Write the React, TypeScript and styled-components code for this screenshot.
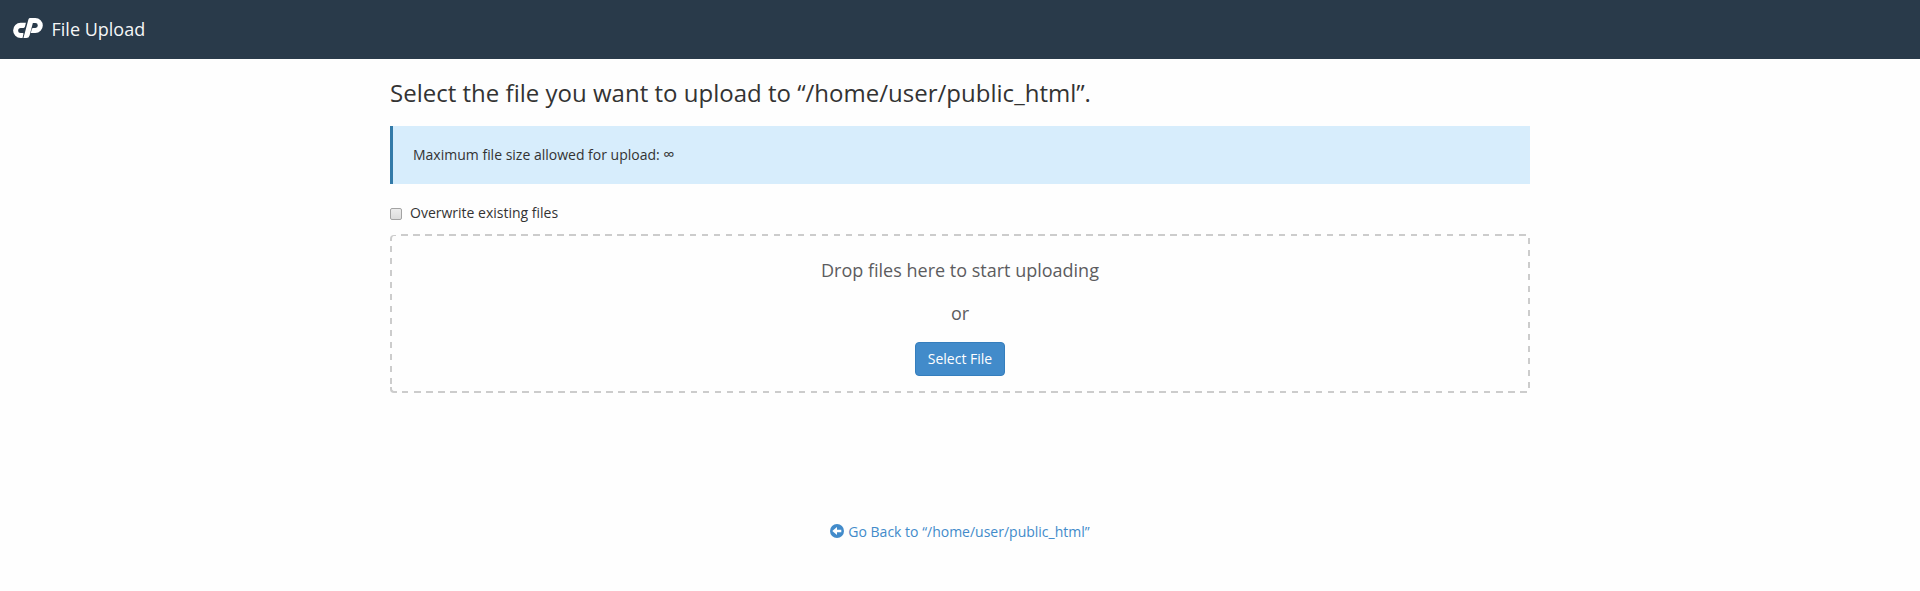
import React from "react";
import styled, { createGlobalStyle } from "styled-components";

const GlobalStyle = createGlobalStyle`
  * { box-sizing: border-box; }
  body {
    margin: 0;
    min-height: 100vh;
    background: #fefefe;
    color: #333;
    font: 14px/20px "Open Sans", sans-serif;
  }
`;

const Header = styled.header`
  display: flex;
  align-items: center;
  gap: 8.500px;
  height: 59px;
  padding: 0 0 1px 13px;
  background: #293a4a;
  color: #f5f6f7;
  font-size: 18px;
`;

const Logo = styled.svg`
  width: 30px;
  height: 20px;
  margin-bottom: 2px;
  fill: #fff;
`;

const Main = styled.main`
  width: 1140px;
  margin: 0 auto;
`;

const Title = styled.h1`
  margin: 20px 0;
  font-size: 24px;
  font-weight: 400;
  line-height: 27px;
  letter-spacing: 0.01px;
`;

const Notice = styled.div`
  height: 58px;
  padding: 19px 20px;
  background: #d7edfc;
  border-left: 3px solid #337aa8;
`;

const Infinity = styled.span`
  font-size: 16px;
  line-height: 0;
`;

const CheckLabel = styled.label`
  display: flex;
  align-items: center;
  gap: 8px;
  height: 20px;
  margin: 19px 0 11px;
`;

const Checkbox = styled.input`
  appearance: none;
  width: 12px;
  height: 12px;
  margin: 2px 0 0;
  border: 1px solid #a3a3a3;
  border-radius: 2px;
  background: linear-gradient(#ececec, #dcdcdc);
`;

const DASH = "#ccc 0 6.5px, transparent 6.5px 12.022px";
const SIDE_DASH = "#ccc 0 6px, transparent 6px 12.02px";

const DropZone = styled.section`
  position: relative;
  display: flex;
  flex-direction: column;
  align-items: center;
  height: 159px;
  padding-top: 24px;
  color: #5c5c5e;
  font-size: 18px;
  background:
    repeating-linear-gradient(90deg, ${DASH}) 11px 0 / 1125px 2px no-repeat,
    repeating-linear-gradient(90deg, ${DASH}) 12px 100% / 1125px 2px no-repeat,
    repeating-linear-gradient(180deg, ${SIDE_DASH}) 0 12px / 2px 139px no-repeat,
    repeating-linear-gradient(180deg, ${SIDE_DASH}) 100% 4px / 2px 151px no-repeat;

  &::before,
  &::after {
    content: "";
    position: absolute;
    left: 0;
    width: 4px;
    height: 5px;
    border-left: 2px solid #ccc;
  }
  &::before {
    top: 1px;
    border-top: 1px solid #ccc;
    border-top-left-radius: 4px;
  }
  &::after {
    bottom: 0;
    width: 5px;
    height: 4px;
    border-bottom: 2px solid #ccc;
    border-bottom-left-radius: 4px;
  }
`;

const DropText = styled.p`
  margin: 0 0 18px;
  line-height: 25px;
`;

const Button = styled.button`
  width: 90px;
  height: 34px;
  margin-top: -2px;
  padding: 0;
  border: 1px solid #357ebd;
  border-radius: 4px;
  background: #428bca;
  color: #fff;
  font: 14px/20px "Open Sans", sans-serif;
`;

const BackLink = styled.a`
  display: flex;
  justify-content: center;
  align-items: center;
  gap: 4px;
  margin-top: 129px;
  color: #428bca;
`;

const BackIcon = styled.svg`
  width: 14px;
  height: 14px;
  margin-top: -2px;
`;

export default function App() {
  return (
    <>
      <GlobalStyle />
      <Header>
        <Logo viewBox="0 0 30 20.2">
          <path d="M7.6 4.9h5.3l-1 4q-.3 1.1-1.4 1.1H7.6a2.55 2.55 0 0 0 0 5.1h2.1q1 0 .7 1l-.9 4.1H7.6A7.6 7.6 0 0 1 7.6 4.9Z" />
          <path d="M15.4 1.5Q15.8 0 17.3 0h5.1a7.55 7.55 0 0 1 0 15.1h-4.6l1-3.7q.3-1.3 1.5-1.3h2.1a2.5 2.5 0 0 0 0-5h-2.5l-3.3 12.5q-.7 2.6-3.3 2.6h-2.9Z" />
        </Logo>
        File Upload
      </Header>
      <Main>
        <Title>Select the file you want to upload to “/home/user/public_html”.</Title>
        <Notice>
          Maximum file size allowed for upload: <Infinity>∞</Infinity>
        </Notice>
        <CheckLabel>
          <Checkbox type="checkbox" />
          Overwrite existing files
        </CheckLabel>
        <DropZone>
          <DropText>Drop files here to start uploading</DropText>
          <DropText>or</DropText>
          <Button>Select File</Button>
        </DropZone>
        <BackLink>
          <BackIcon viewBox="0 0 14 14">
            <circle cx="7" cy="7" r="7" fill="#428bca" />
            <path d="M2.3 7 7 3v2.7h4.3v2.6H7V11Z" fill="#fff" />
          </BackIcon>
          Go Back to “/home/user/public_html”
        </BackLink>
      </Main>
    </>
  );
}
